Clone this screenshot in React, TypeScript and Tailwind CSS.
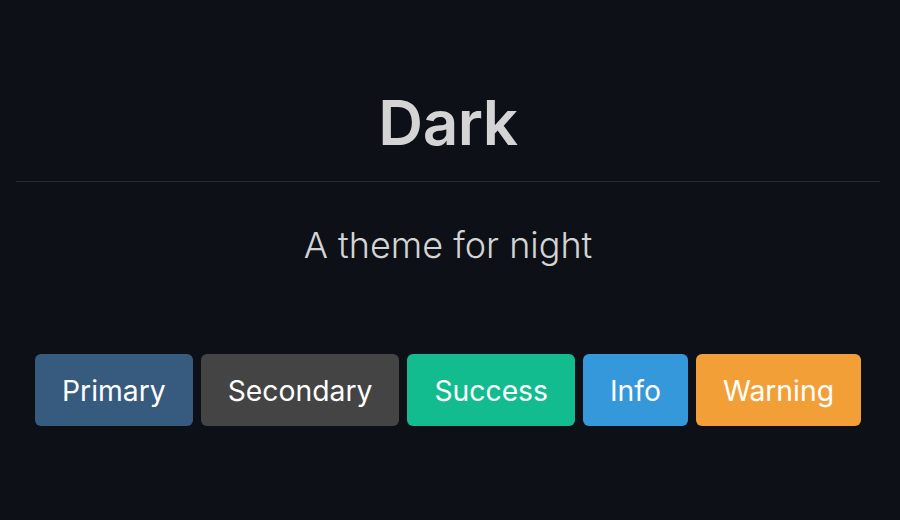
import React from "react";

const buttons = [
  { label: "Primary", className: "bg-[#375a7f]" },
  { label: "Secondary", className: "bg-[#444444]" },
  { label: "Success", className: "bg-[#12bc8f]" },
  { label: "Info", className: "bg-[#3498db]" },
  { label: "Warning", className: "bg-[#f39f37]" },
];

const App = (): React.JSX.Element => {
  return (
    <div className="w-[900px] h-[520px] bg-[#0d1017] pl-4 pr-5 font-['Inter',sans-serif] overflow-hidden">
      <div className="pt-[83px] text-center">
        <h1 className="text-[62px] leading-[80px] font-semibold text-[#d4d4d4] tracking-[-0.5px]">
          Dark
        </h1>
        <div className="mt-[18px] h-px bg-[#262a33]" />
        <p className="mt-[41px] text-[36px] leading-[44px] font-light text-[#d4d4d4]">
          A theme for night
        </p>
      </div>
      <div className="mt-[87px] flex justify-center gap-2">
        {buttons.map((b) => (
          <button
            key={b.label}
            className={`${b.className} h-[72px] px-[27px] pt-[3px] rounded-md text-[28.3px] text-white`}
          >
            {b.label}
          </button>
        ))}
      </div>
    </div>
  );
};

export default App;
